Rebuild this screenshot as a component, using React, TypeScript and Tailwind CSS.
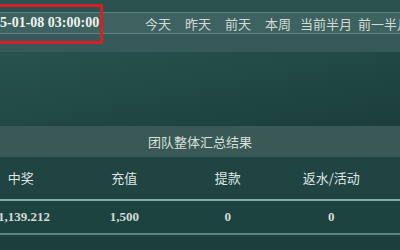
import React from "react";

const sans = { fontFamily: '"Noto Sans CJK SC", "Noto Sans", sans-serif' };
const serif = { fontFamily: '"Liberation Serif", "Noto Sans CJK SC", serif' };

export default function App() {
  const menu = [
    { t: "今天", w: "w-[40px]" },
    { t: "昨天", w: "w-[40px]" },
    { t: "前天", w: "w-[40px]" },
    { t: "本周", w: "w-[35px]" },
    { t: "当前半月", w: "w-[58px]" },
    { t: "前一半月", w: "w-[58px]" },
  ];
  const heads = ["中奖", "充值", "提款", "返水/活动", "手续费/佣金"];
  const vals = ["21,139.212", "1,500", "0", "0", "0"];
  return (
    <div className="relative w-[400px] h-[250px] overflow-hidden bg-[#1d3f3d] flex flex-col">
      <div className="h-[12px] bg-[#2c524f]" />
      <div className="h-[1px] bg-[#5f817d]" />
      <div className="h-[20px] bg-[#3e625f] flex items-center overflow-hidden whitespace-nowrap">
        <div
          className="-ml-[21px] w-[166px] shrink-0 text-[14px] leading-none font-bold text-[#eef3ef]"
          style={serif}
        >
          2025-01-08 03:00:00
        </div>
        {menu.map((m) => (
          <div
            key={m.t}
            className={`${m.w} shrink-0 text-[13px] leading-none text-[#d3dbd8]`}
            style={sans}
          >
            {m.t}
          </div>
        ))}
      </div>
      <div className="h-[1px] bg-[#628480]" />
      <div className="h-[18px] bg-[#36595a]" />
      <div className="h-[74px] bg-linear-to-br from-[#27534f] to-[#1b3e3c]" />
      <div
        className="h-[31px] bg-[#3a5956] flex items-center justify-center text-[13px] text-[#d8e0dd]"
        style={sans}
      >
        团队整体汇总结果
      </div>
      <div className="h-[42px] bg-[#1f4442] flex items-center -ml-[31px] whitespace-nowrap">
        {heads.map((h) => (
          <div
            key={h}
            className="w-[103.5px] shrink-0 text-center text-[13px] text-[#dfe6e3]"
            style={sans}
          >
            {h}
          </div>
        ))}
      </div>
      <div className="h-[2px] bg-[#86a9a4]" />
      <div className="h-[32px] bg-[#1d4341] flex items-center -ml-[31px] whitespace-nowrap">
        {vals.map((v, i) => (
          <div
            key={i}
            className="w-[103.5px] shrink-0 text-center text-[13px] font-bold text-[#d2dbd7]"
            style={serif}
          >
            {v}
          </div>
        ))}
      </div>
      <div className="h-[2px] bg-[#5f827d]" />
      <div className="flex-1 bg-[#1c3f3d]" />
      <div className="absolute left-[-10px] top-[4px] w-[113px] h-[40px] border-[3px] border-[#d81f26]" />
    </div>
  );
}
